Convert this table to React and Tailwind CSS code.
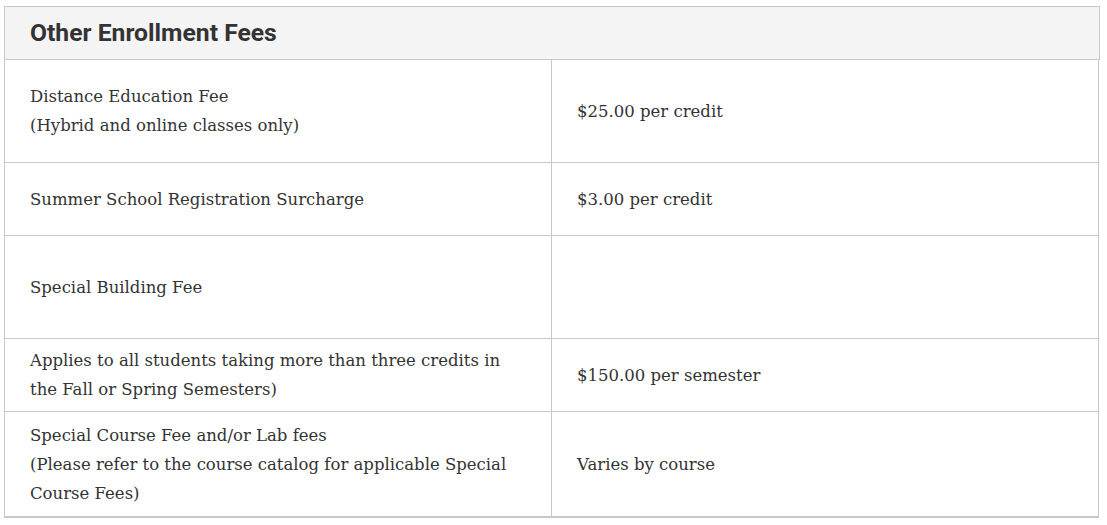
const rows = [
  { h: "h-[103px]", left: ["Distance Education Fee", "(Hybrid and online classes only)"], right: "$25.00 per credit" },
  { h: "h-[73px]", left: ["Summer School Registration Surcharge"], right: "$3.00 per credit" },
  { h: "h-[103px]", left: ["Special Building Fee"], right: "" },
  { h: "h-[73px]", left: ["Applies to all students taking more than three credits in the Fall or Spring Semesters)"], right: "$150.00 per semester" },
  { h: "h-[104px]", left: ["Special Course Fee and/or Lab fees", "(Please refer to the course catalog for applicable Special Course Fees)"], right: "Varies by course" },
];

export default function App() {
  return (
    <div className="min-h-screen bg-white pl-[4px] pt-[6px]">
      <div className="w-[1096px]">
        <div className="flex h-[54px] items-center border border-[#c8c8c8] bg-[#f4f4f4] pl-[25px]">
          <h2 className="font-['Roboto',sans-serif] text-[24.7px] font-bold text-[#333]">
            Other Enrollment Fees
          </h2>
        </div>
        <div className="mr-[1px] border-x border-b-2 border-[#c8c8c8] font-['DejaVu_Serif',serif] text-[16.5px] leading-[29px] text-[#333]">
          {rows.map((r, i) => (
            <div
              key={i}
              className={`grid grid-cols-[547px_1fr] ${r.h} ${i < rows.length - 1 ? "border-b border-[#c8c8c8]" : ""}`}
            >
              <div className="flex flex-col justify-center border-r border-[#c8c8c8] pl-[25px] pr-[30px]">
                {r.left.map((t, j) => (
                  <p key={j}>{t}</p>
                ))}
              </div>
              <div className="flex items-center pl-[25px]">{r.right}</div>
            </div>
          ))}
        </div>
      </div>
    </div>
  );
}
